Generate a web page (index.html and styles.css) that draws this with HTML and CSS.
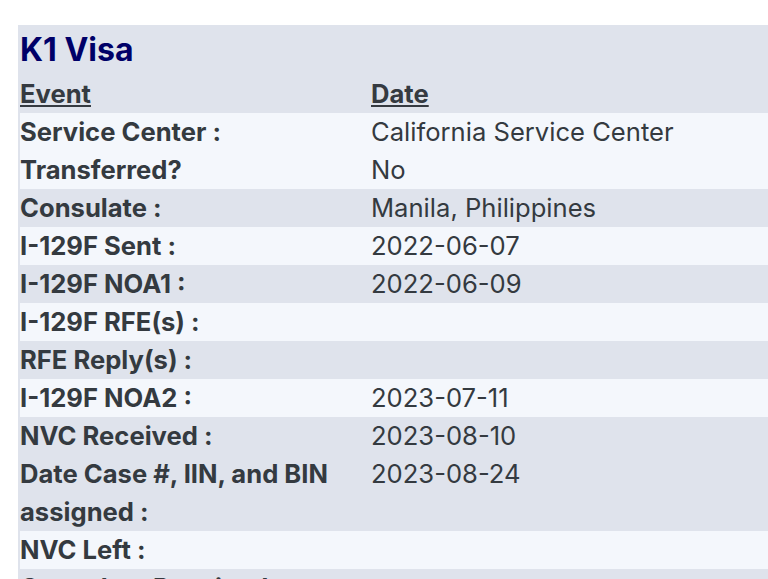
FILE: index.html
```html
<!DOCTYPE html>
<html lang="en">
<head>
    <meta charset="UTF-8">
    <meta name="viewport" content="width=device-width, initial-scale=1.0">
    <title>K1 Visa Timeline</title>
    <link rel="stylesheet" href="styles.css">
</head>
<body>
    <div class="timeline">
        <table class="visa-table">
            <thead>
                <tr>
                    <th colspan="2" class="visa-title">K1 Visa</th>
                </tr>
                <tr class="col-heads">
                    <th class="col-event"><u>Event</u></th>
                    <th><u>Date</u></th>
                </tr>
            </thead>
            <tbody>
                <tr class="light"><td class="label">Service Center :</td><td>California Service Center</td></tr>
                <tr class="light"><td class="label">Transferred?</td><td>No</td></tr>
                <tr class="dark"><td class="label">Consulate :</td><td>Manila, Philippines</td></tr>
                <tr class="light"><td class="label">I-129F Sent :</td><td>2022-06-07</td></tr>
                <tr class="dark"><td class="label">I-129F NOA1 :</td><td>2022-06-09</td></tr>
                <tr class="light"><td class="label">I-129F RFE(s) :</td><td></td></tr>
                <tr class="dark"><td class="label">RFE Reply(s) :</td><td></td></tr>
                <tr class="light"><td class="label">I-129F NOA2 :</td><td>2023-07-11</td></tr>
                <tr class="dark"><td class="label">NVC Received :</td><td>2023-08-10</td></tr>
                <tr class="dark"><td class="label">Date Case #, IIN, and BIN assigned :</td><td>2023-08-24</td></tr>
                <tr class="light"><td class="label">NVC Left :</td><td></td></tr>
                <tr class="dark"><td class="label">Consulate Received :</td><td></td></tr>
            </tbody>
        </table>
    </div>
</body>
</html>
```

FILE: styles.css
```css
body {
    margin: 0;
    padding: 0;
    background-color: #ffffff;
    font-family: 'Inter', 'Liberation Sans', sans-serif;
    color: #343a40;
}
.timeline {
    padding: 25px 0 0 18px;
}
.visa-table {
    width: 100%;
    border-collapse: collapse;
    background-color: #dfe3ec;
    border-left: 2px solid #dfe3ec;
    font-size: 25.6px;
    line-height: 38px;
}
.visa-table th,
.visa-table td {
    padding: 0;
    text-align: left;
    vertical-align: top;
}
.visa-title {
    font-size: 32px;
    line-height: 50px;
    font-weight: 700;
    color: #000068;
}
.col-heads th {
    font-weight: 700;
    color: #353a41;
}
.col-event {
    width: 351px;
}
.label {
    font-weight: 700;
    padding-right: 20px !important;
}
.light {
    background-color: #f4f7fc;
}
.dark {
    background-color: #dfe3ec;
}
```
